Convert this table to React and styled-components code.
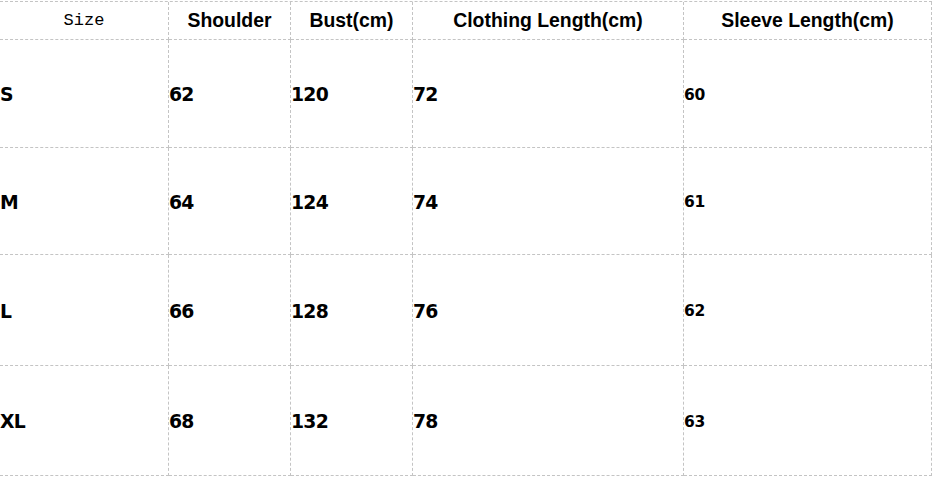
import React from "react";
import styled, { createGlobalStyle } from "styled-components";

const Global = createGlobalStyle`
  html, body { margin: 0; padding: 0; background: #fff; }
  body { width: 932px; height: 477px; overflow: hidden; }
`;

const COLS = [169, 122, 122, 271, 248];
const LINE = "1px dashed #c4c4c4";

const Table = styled.div`
  margin-top: 1px;
  display: grid;
  grid-template-columns: ${COLS.map((c) => c + "px").join(" ")};
  border-top: ${LINE};
  width: 932px;
  box-sizing: border-box;
`;

const Cell = styled.div`
  box-sizing: border-box;
  height: ${(p) => p.$h}px;
  border-right: ${LINE};
  border-bottom: ${LINE};
  display: flex;
  align-items: center;
  color: #000;
  white-space: nowrap;
  overflow: hidden;
`;

const HeadCell = styled(Cell)`
  justify-content: center;
  font-family: ${(p) =>
    p.$mono ? '"Liberation Mono", "Courier New", monospace' : '"Liberation Sans", Arial, sans-serif'};
  font-weight: ${(p) => (p.$mono ? 400 : 700)};
  font-size: ${(p) => (p.$mono ? "17px" : "19.4px")};
  padding-bottom: 1px;
`;

const BodyCell = styled(Cell)`
  justify-content: flex-start;
  font-family: "DejaVu Sans", Verdana, Tahoma, sans-serif;
  font-weight: 700;
  font-size: ${(p) => (p.$small ? "15.5px" : "18.8px")};
  letter-spacing: ${(p) => (p.$small ? "-0.2px" : "-0.7px")};
  padding-top: 2px;
`;

const headers = ["Size", "Shoulder", "Bust(cm)", "Clothing Length(cm)", "Sleeve Length(cm)"];
const rows = [
  { h: 108, v: ["S", "62", "120", "72", "60"] },
  { h: 107, v: ["M", "64", "124", "74", "61"] },
  { h: 111, v: ["L", "66", "128", "76", "62"] },
  { h: 110, v: ["XL", "68", "132", "78", "63"] },
];

export default function App() {
  return (
    <>
      <Global />
      <Table>
        {headers.map((t, i) => (
          <HeadCell key={t} $h={38} $mono={i === 0}>
            {t}
          </HeadCell>
        ))}
        {rows.map((r, ri) =>
          r.v.map((t, ci) => (
            <BodyCell key={ri + "-" + ci} $h={r.h} $small={ci === 4}>
              {t}
            </BodyCell>
          ))
        )}
      </Table>
    </>
  );
}
